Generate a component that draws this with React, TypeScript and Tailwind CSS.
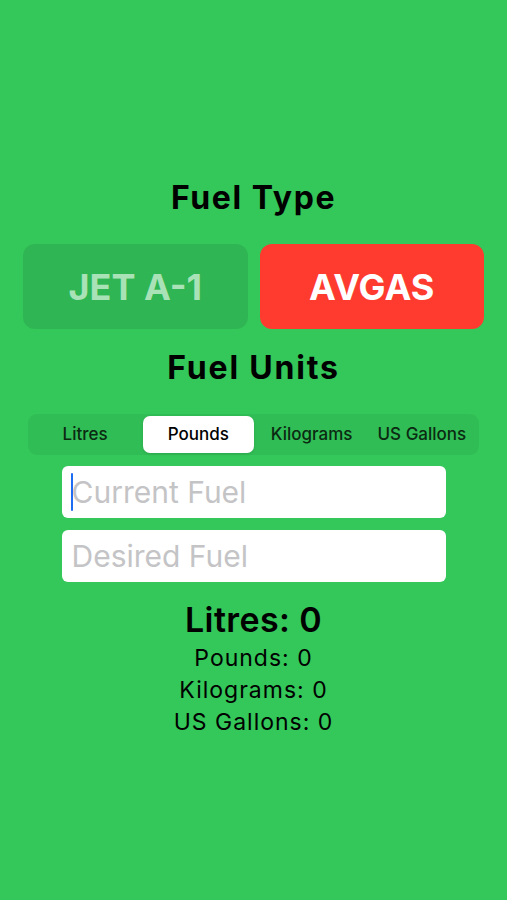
import { useState } from 'react'

const units = ['Litres', 'Pounds', 'Kilograms', 'US Gallons']

export default function App() {
  const [fuel, setFuel] = useState<'jet' | 'avgas'>('avgas')
  const [unit, setUnit] = useState('Pounds')
  const [current, setCurrent] = useState('')
  const [desired, setDesired] = useState('')

  return (
    <div
      className="min-h-[900px] w-full bg-[#34c759] flex flex-col items-center text-black"
      style={{ fontFamily: 'Inter, "Noto Sans", sans-serif' }}
    >
      <h1 className="mt-[178px] text-[32px] font-bold leading-[40px] tracking-[1.6px]">Fuel Type</h1>

      {/* Fuel type buttons */}
      <div className="mt-[26px] w-full px-[23px] flex gap-[12px]">
        <button
          onClick={() => setFuel('jet')}
          className={`flex-1 h-[85px] rounded-[12px] text-[36px] font-bold ${fuel === 'jet' ? 'bg-[#ff3b30] text-white' : 'bg-[#2fb553] text-[#a9e2b7]'}`}
        >
          JET A-1
        </button>
        <button
          onClick={() => setFuel('avgas')}
          className={`flex-1 h-[85px] rounded-[12px] text-[36px] font-bold ${fuel === 'avgas' ? 'bg-[#ff3b30] text-white' : 'bg-[#2fb553] text-[#a9e2b7]'}`}
        >
          AVGAS
        </button>
      </div>

      <h2 className="mt-[19px] text-[32px] font-bold leading-[40px] tracking-[1.8px]">Fuel Units</h2>

      {/* Segmented control */}
      <div className="mt-[26px] w-[451px] h-[41px] rounded-[9px] bg-[#31bd55] p-[2px] flex">
        {units.map(u => (
          <button
            key={u}
            onClick={() => setUnit(u)}
            className={`flex-1 rounded-[7px] text-[17px] font-medium text-[#0b2a12] ${unit === u ? 'bg-white text-black mx-[3px] shadow-[0_1px_3px_rgba(0,0,0,0.12)]' : ''}`}
          >
            {u}
          </button>
        ))}
      </div>

      {/* Inputs */}
      <div className="mt-[11px] relative">
        <input
          value={current}
          onChange={e => setCurrent(e.target.value)}
          placeholder="Current Fuel"
          className="w-[384px] h-[52px] rounded-[6px] bg-white pl-[10px] text-[30px] outline-none placeholder:text-[#c4c4c6]"
        />
        {current === '' && <span className="absolute left-[9px] top-[7px] w-[2px] h-[38px] bg-[#1d6cf2] rounded-full" />}
      </div>
      <input
        value={desired}
        onChange={e => setDesired(e.target.value)}
        placeholder="Desired Fuel"
        className="mt-[12px] w-[384px] h-[52px] rounded-[6px] bg-white pl-[10px] text-[30px] outline-none placeholder:text-[#c4c4c6]"
      />

      {/* Results */}
      <p className="mt-[19px] text-[34px] font-semibold leading-[38px] tracking-[0.4px]">Litres: 0</p>
      <div className="mt-[3px] flex flex-col items-center text-[23px] leading-[32px] tracking-[1px]">
        <p>Pounds: 0</p>
        <p>Kilograms: 0</p>
        <p>US Gallons: 0</p>
      </div>
    </div>
  )
}
